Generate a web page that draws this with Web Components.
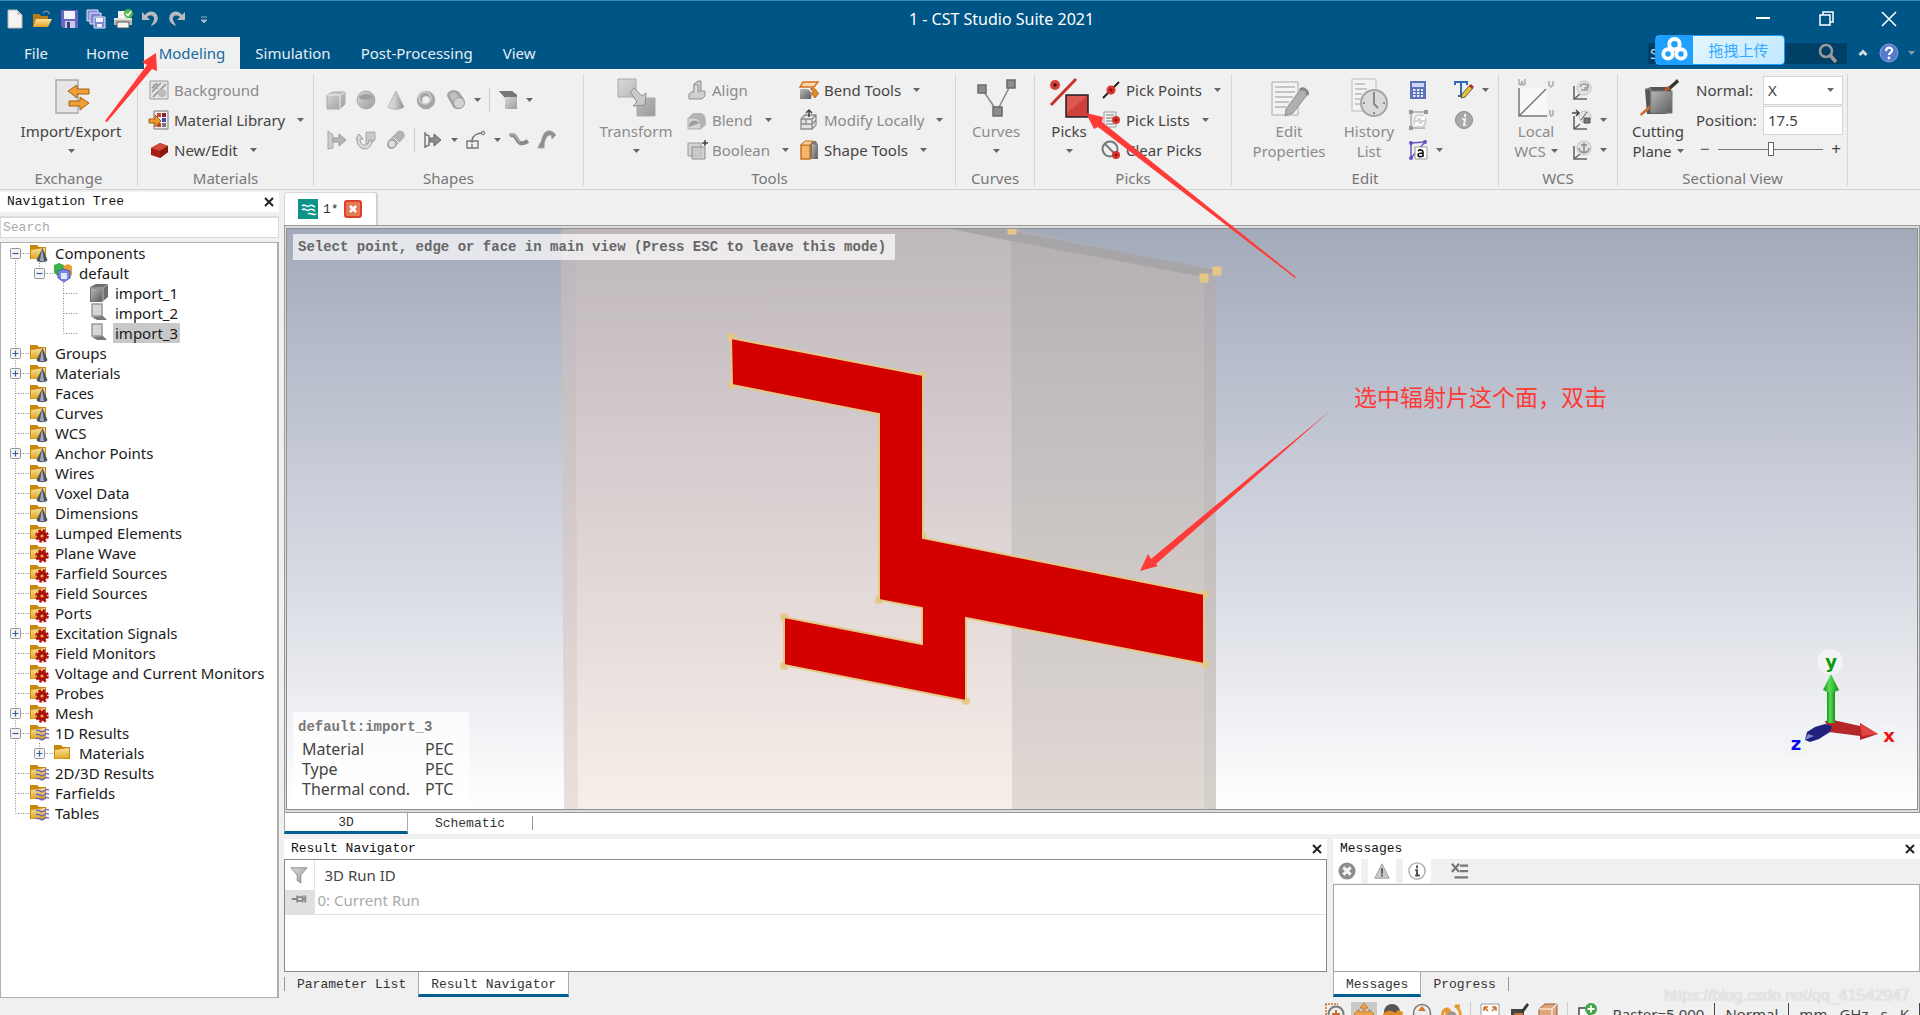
<!DOCTYPE html>
<html lang="en">
<head>
<meta charset="utf-8">
<title>1 - CST Studio Suite 2021</title>
<style>
  html, body { margin: 0; height: 100%; overflow: hidden; }
  body { font: 15px/20px "Noto Sans", "Open Sans", "Noto Sans CJK SC", sans-serif; color: #444; background: #f0f0f0; }
</style>
</head>
<body>
<studio-app></studio-app>
<script>
const MONO = '"Liberation Mono", "Noto Sans CJK SC", monospace';
const define = (name, css, html, setup) => customElements.define(name, class extends HTMLElement {
  connectedCallback() {
    if (this.shadowRoot) return;
    const root = this.attachShadow({ mode: 'open' });
    const body = typeof html === 'function' ? html(this) : html;
    root.innerHTML = `<style>:host{display:block}*{box-sizing:border-box}button{font:inherit;color:inherit;background:none;border:0;padding:0;margin:0}${css}</style>${body}`;
    if (setup) setup(this, root);
  }
});

/* ---------- icons ---------- */
const folder = '<path d="M1 2h7l2 2h7v12H1z" fill="#c8860d"/><path d="M2 7l14-2v10l-14 1z" fill="url(#o)"/>';
const cone = folder + '<path d="M13.500 5l5 12c-1 3-10 3-11 0z" fill="#4e5360"/><path d="M13 6l2 12c-2 1-4 0-4-1z" fill="#a3a9bb"/>';
const gear = folder + '<circle cx="13" cy="13" r="5" fill="#a81010"/><circle cx="13" cy="13" r="5.600" fill="none" stroke="#b31313" stroke-width="2.400" stroke-dasharray="2.600 1.800"/><circle cx="13" cy="13" r="1.600" fill="#e8b030"/>';
const wave = folder + '<g fill="none" stroke="#7468b8" stroke-width="1.500"><path d="M7 8c3-3 5 3 8 0s3-1 5-1M7 12c3-3 5 3 8 0s3-1 5-1M7 16c3-3 5 3 8 0s3-1 5-1"/></g>';
const axes = '<path d="M2 6v13h13M2 19l6-5" fill="none" stroke="#666" stroke-width="1.600"/>';
const ICONS = {
  /* quick access */
  newdoc: '<path d="M3 1h9l5 5v13H3z" fill="#f6f4f2" stroke="#b9b5b0"/><path d="M12 1v5h5z" fill="#cfc9c3"/>',
  open: '<path d="M1 5h6l2 2h7v11H1z" fill="#b97d15"/><path d="M4 10h16l-4 8H1z" fill="url(#o)"/><path d="M11 4c3-3 5-2 7 1" fill="none" stroke="#6b94ad" stroke-width="1.300"/>',
  save: '<path d="M2 1h17v18H4l-2-2z" fill="#6667c0"/><path d="M5 2h11v8H5z" fill="#f1f2fa"/><path d="M6 12h10v7H6z" fill="#c9cbe6"/><path d="M8 13h3v6H8z" fill="#3e3f73"/>',
  saveall: '<g fill="#7f87cf" stroke="#e4e7fb"><path d="M1 1h11v11H1z"/><path d="M4 4h11v11H4z"/><path d="M8 8h11v11H8z"/></g><path d="M10 9h7v4h-7zM11 15h5v3h-5z" fill="#eef0fd"/>',
  print: '<path d="M5 2h9v7H5z" fill="#f4f4f4"/><path d="M1 9h18v7H1z" fill="#bcbab4"/><path d="M1 9h18v2H1z" fill="#e4e2dc"/><path d="M4 13h12v6H4z" fill="#f5f5f5" stroke="#555"/><circle cx="15.500" cy="4.500" r="4.500" fill="#4db848"/><path d="M13 4.500l2 2 3-4" fill="none" stroke="#fff" stroke-width="1.500"/>',
  undo: '<path d="M2 3v8h8L7 8c4-3 8-1 7 3-1 3-3 5-3 6 6-2 8-7 6-11S9 1 5 6z" fill="#b9babd"/>',
  redo: '<path d="M18 3v8h-8l3-3c-4-3-8-1-7 3 1 3 3 5 3 6-6-2-8-7-6-11s8-5 12 0z" fill="#b9babd"/>',
  qat: '<path d="M7 8h6M7 11h6l-3 3z" stroke="#9fb4c4" fill="#9fb4c4"/>',
  min: '<path d="M3 9h14" stroke="#fff" stroke-width="2"/>',
  restore: '<path d="M4 6h10v10H4zM7 6V3h10v10h-3" fill="none" stroke="#fff" stroke-width="1.500"/>',
  close: '<path d="M3 3l14 14M17 3L3 17" stroke="#fff" stroke-width="1.600"/>',
  search: '<circle cx="8" cy="8" r="6" fill="none" stroke="#9a9a9a" stroke-width="2.500"/><path d="M12 12l6 7" stroke="#9a9a9a" stroke-width="3.500"/>',
  up: '<path d="M5 13l5-5 5 5" fill="none" stroke="#d8dfe4" stroke-width="4"/>',
  help: '<circle cx="10" cy="10" r="9" fill="#5579cc" stroke="#89a4de"/><path d="M7 8c0-5 7-4 6 0-1 2-3 2-3 4" fill="none" stroke="#fff" stroke-width="2.200"/><circle cx="10" cy="15" r="1.400" fill="#fff"/>',
  cloud: '<g fill="none" stroke="#fff" stroke-width="3"><circle cx="10" cy="5.500" r="4"/><circle cx="5" cy="13" r="3.600"/><circle cx="15" cy="13" r="3.600"/></g>',
  /* ribbon, small */
  bg: '<path d="M1 1h18v18H1z" fill="#e4e4e4" stroke="#999"/><path d="M3 12l9-9M3 8l5-5M4 17L17 4M13 17l4-4" stroke="#8d8d8d" stroke-width="1.500"/><circle cx="13" cy="13" r="4" fill="#bbb"/><path d="M4 4h5v5H4z" fill="#aaa"/>',
  matlib: '<path d="M5 1h14v18H5z" fill="#eee" stroke="#777"/><path d="M8 3h4v4H8zM8 13h4v4H8z" fill="#c94040"/><path d="M13 3h4v4h-4z" fill="#8c1f2b"/><path d="M13 8h4v4h-4z" fill="#4748b8"/><path d="M13 13h4v4h-4z" fill="#777"/><path d="M0 9h6V5l6 6-6 6v-4H0z" fill="#e89a2c" stroke="#a9610e"/>',
  newedit: '<path d="M2 8l9-5 8 3v6l-8 6-9-3z" fill="#a71f12"/><path d="M2 8l9-5 8 3-8 5z" fill="#d2493a"/><path d="M11 11l8-5v6l-8 6z" fill="#8a160c"/>',
  box: '<path d="M1 5l6-3h12v12l-5 5H1z" fill="url(#g)" stroke="#aaa"/><path d="M1 5h13l5-3M14 5v14" fill="none" stroke="#eee"/>',
  sphere: '<circle cx="10" cy="10" r="9" fill="url(#g)" stroke="#aaa"/><ellipse cx="10" cy="7" rx="7" ry="3" fill="#a0a0a0"/>',
  conesh: '<path d="M10 1l8 16c-3 3-13 3-16 0z" fill="url(#gh)" stroke="#b5b5b5"/>',
  torus: '<circle cx="10" cy="10" r="6.500" fill="none" stroke="#a6a6a6" stroke-width="5.500"/><circle cx="9" cy="8" r="6" fill="none" stroke="#cfcfcf" stroke-width="1.500"/>',
  cyl: '<path d="M1 6c0-6 8-7 12-4l5 7c3 8-7 13-11 8z" fill="#a2a2a2"/><path d="M3 4l6-2 4 5-6 5z" fill="#c2c2c2"/><circle cx="13" cy="13" r="5.500" fill="#d2d2d2" stroke="#999"/>',
  shell: '<path d="M1 1h13l5 4v14H7V8z" fill="#6d6d6d"/><path d="M7 7h12v12H7z" fill="url(#g)"/><path d="M1 1l6 6h12l-5-6z" fill="#777"/>',
  extr: '<path d="M2 1l5 4v13l-5 1z" fill="#ccc" stroke="#aaa"/><path d="M7 8h6V4l7 6-7 6v-4H7z" fill="#b7b7b7" stroke="#999"/>',
  rot: '<path d="M10 2h9v8l-5 4h-4z" fill="#c9c9c9" stroke="#aaa"/><path d="M4 9c0 8 9 8 9 1h3c0 12-15 12-15-1h-1l3-5 4 5z" fill="#ddd" stroke="#999"/>',
  loft: '<path d="M2 11L12 1c5-2 8 3 6 7L8 18c-5 3-9-2-6-7z" fill="#b3b3b3"/><circle cx="6" cy="14" r="4" fill="#ddd" stroke="#999"/><path d="M8 8l5 5" stroke="#eee"/>',
  extr2: '<path d="M2 2v16M2 4l4 2v9l-4 2" fill="none" stroke="#777" stroke-width="1.500"/><path d="M7 8h4V4l7 6-7 6v-4H7z" fill="#8d8d8d" stroke="#666"/>',
  bondwire: '<path d="M1 11h11v7H1zM6 13v-3C7 5 12 3 17 3M6 14v4" fill="none" stroke="#777" stroke-width="1.400"/><circle cx="17" cy="3" r="1.800" fill="#ccc" stroke="#777"/>',
  curve: '<path d="M1 6c5-4 7 6 10 7s5 0 8-2" fill="none" stroke="#8a8a8a" stroke-width="4"/><path d="M1 5c5-4 7 6 10 7" fill="none" stroke="#ccc"/>',
  trace: '<path d="M1 18h6c0-6 2-14 7-13l1 4 4-4c-6-7-12-5-14 4-1 4-3 5-4 9z" fill="#8e8e8e" stroke="#aaa"/>',
  align: '<path d="M7 4l4-3h3v11l-3 2H7z" fill="#c9c9c9" stroke="#8f8f8f"/><path d="M2 14l4-3h12v5l-3 3H2z" fill="#cfcfcf" stroke="#8f8f8f"/><path d="M7 13V5h4v8" fill="#ddd" stroke="#999"/>',
  blend: '<path d="M1 8l5-5h7c4 0 6 4 6 8v4l-5 4H1z" fill="#b4b4b4"/><path d="M1 8h6c5 0 7 4 7 8v3H1z" fill="#d6d6d6" stroke="#aaa"/><path d="M2 17c0-6 5-9 11-4" fill="#9d9d9d"/>',
  bool: '<path d="M1 3h13v13H1z" fill="#d5d5d5" stroke="#9a9a9a"/><path d="M5 7h13v12H5z" fill="#c4c4c4" fill-opacity=".7" stroke="#8f8f8f"/><path d="M18 0v6M15 3h6" stroke="#444" stroke-width="1.500"/>',
  bend: '<path d="M4 2h15l-4 5H1z" fill="#fbd9ae" stroke="#d5701c" stroke-width="1.500"/><path d="M1 9h5c6 0 7 5 6 10H1z" fill="url(#gd)"/><path d="M12 8c4 0 6 2 6 5h2l-4 5-4-5h2c0-2-1-3-2-3z" fill="#e08b28" stroke="#b4600c" stroke-width=".8"/>',
  modify: '<path d="M2 9l4-4h11v10l-4 4H2zM2 9h11l4-4M13 9v10M2 14h11l4-4M7 9v5" fill="#e2e2e2" stroke="#8c8c8c" stroke-width="1.300"/><path d="M10 7V1M7 3l3-3 3 3" fill="none" stroke="#444" stroke-width="1.500"/>',
  shape: '<path d="M2 4l4-3h11l2 4v14H2z" fill="#777"/><path d="M2 5h9v14H2z" fill="#f2b66f" stroke="#c9721c" stroke-width="1.500"/><path d="M2 5l4-4h8l-3 4z" fill="#f8cf9c" stroke="#c9721c"/><path d="M13 4v15h5V5z" fill="url(#gd)"/>',
  ppoint: '<path d="M2 18L18 2" stroke="#222" stroke-width="2"/><circle cx="10" cy="10" r="4.500" fill="#d9342b"/><circle cx="10" cy="10" r="1.500" fill="#7a0f0b"/>',
  plist: '<path d="M3 2h12v15H3z" fill="#f3f3f3" stroke="#999"/><path d="M5 5h8M5 8h8M5 11h8M5 14h8" stroke="#777"/><circle cx="15" cy="10" r="4" fill="#d9342b"/><circle cx="15" cy="10" r="1.300" fill="#7a0f0b"/>',
  pclear: '<circle cx="9" cy="9" r="7.500" fill="none" stroke="#777" stroke-width="2"/><path d="M4 4l11 11" stroke="#777" stroke-width="2"/><circle cx="15" cy="15" r="4" fill="#d9342b"/><circle cx="15" cy="15" r="1.300" fill="#7a0f0b"/>',
  calc: '<path d="M2 1h16v18H2z" fill="#5b71b8"/><path d="M4 3h12v4H4z" fill="#c9d6f5"/><path d="M5 10h10M5 13h10M5 16h10" stroke="#e6ecfb" stroke-width="2" stroke-dasharray="2.500 1.500"/>',
  update: '<path d="M3 2h15M3 2v16M3 18h14" fill="none" stroke="#aaa" stroke-width="1.500"/><g fill="#999"><path d="M1 0h4v4H1zM16 0h4v4h-4zM1 16h4v4H1z"/></g><circle cx="12" cy="11" r="7" fill="#d2d2d2"/><path d="M8 10c1-4 6-4 8-1M16 12c-2 4-6 4-8 1M16 6v3h-3M8 16v-3h3" fill="none" stroke="#fff" stroke-width="1.800"/>',
  param: '<path d="M3 3v15M3 3l14-1M3 18L17 2" fill="none" stroke="#6a58c8" stroke-width="1.500"/><g fill="#6350c4"><circle cx="3" cy="3" r="2"/><circle cx="17" cy="2" r="2"/><circle cx="3" cy="18" r="2"/></g><path d="M7 7h12v12H7z" fill="#fff" stroke="#999"/><path d="M10 11c2-2 5-1 5 1v4c-3 1-5 1-5-1s3-2 5-2" fill="none" stroke="#111" stroke-width="1.600"/>',
  textedit: '<path d="M1 5V2h12v3M7 2v14M4 16h6" fill="none" stroke="#2d6cb5" stroke-width="2"/><path d="M8 14l8-9 3 3-8 9-4 1z" fill="#e2c14b" stroke="#6b5a20"/><path d="M15 6l2-2 3 3-2 2z" fill="#b2322a"/>',
  info: '<circle cx="10" cy="10" r="8.500" fill="#a9a9a9" stroke="#8a8a8a"/><path d="M11 4v3M8 9h3l-1 6h2" fill="none" stroke="#eee" stroke-width="2"/>',
  wcs1: axes + '<circle cx="12" cy="8" r="7" fill="#e3e3e3" stroke="#c2c2c2"/><path d="M8 7c1-4 7-4 8 0M16 4v4h-4M9 10h7" fill="none" stroke="#999" stroke-width="1.500"/>',
  wcs2: axes + '<path d="M0 3h7M4 0l3 3-3 3" fill="none" stroke="#444" stroke-width="1.500"/><circle cx="13" cy="7" r="6" fill="#e3e3e3" stroke="#c2c2c2"/><path d="M9 10l6-8M12 8h6v5h-6z" fill="#777" stroke="#555"/>',
  wcs3: axes + '<circle cx="12" cy="8" r="7" fill="#e3e3e3" stroke="#c2c2c2"/><path d="M12 3v10M7 8c0 6 10 6 10 0M9 5h6" fill="none" stroke="#888" stroke-width="1.500"/>',
  /* ribbon, large (drawn on 40 x 40) */
  import: ['<path d="M5 2h22v33H5z" fill="#e6e6e6" stroke="#aaa" stroke-width="1.500"/><g fill="#ee9f35" stroke="#a9610e"><path d="M38 11v5H26v4l-9-7 9-6v4z"/><path d="M18 23v5h11v4l9-7-9-6v4z"/></g>'],
  transform: ['<path d="M2 1h18v18H2zM21 20h18v18H21z" fill="url(#g)" stroke="#aaa"/><path d="M14 14l4-4 8 8 4-3-1 12-12 1 4-4z" fill="#c9c9c9" stroke="#909090"/>'],
  curves: ['<path d="M6 11l15 22L35 6" fill="none" stroke="#888" stroke-width="1.500"/><g fill="#8d8d8d" stroke="#6a6a6a" stroke-width="1.500"><path d="M2 7h8v8H2zM31 2h8v8h-8zM17 29h9v9h-9z"/></g>'],
  picks: ['<circle cx="6" cy="7" r="5" fill="#d9403a"/><circle cx="6" cy="7" r="1.800" fill="#3d0b09"/><path d="M2 27L27 1" stroke="#c9332e" stroke-width="3"/><path d="M17 17h22v22H17z" fill="#cf403b" stroke="#222" stroke-width="1.500"/><path d="M18 35l20-17H18z" fill="#da5a52"/>'],
  editprop: ['<path d="M3 4h26v33H3z" fill="#f3f3f3" stroke="#aaa"/><path d="M6 9h20M6 14h20M6 19h18M6 24h14M6 29h11" stroke="#b5b5b5" stroke-width="1.600"/><path d="M17 31L31 12c3-3 9 1 7 5L24 35l-8 3z" fill="#b0b0b0" stroke="#8e8e8e"/><path d="M31 12c3-3 9 1 7 5" fill="none" stroke="#888" stroke-width="3"/>'],
  history: ['<path d="M3 1h24v32H3z" fill="#f3f3f3" stroke="#bbb"/><path d="M6 6h10M6 11h12M6 16h7M6 21h5M6 26h5" stroke="#bbb" stroke-width="1.600"/><circle cx="25" cy="25" r="13" fill="#dadada" stroke="#a6a6a6" stroke-width="2"/><path d="M25 16v10l4 4" fill="none" stroke="#888" stroke-width="2"/><path d="M25 14v2M25 34v2M14 25h2M34 25h2" stroke="#888" stroke-width="2"/>'],
  localwcs: ['<path d="M3 10h28v28H3z" fill="#f8f8f8"/><path d="M3 10v28h28M3 38L30 11" fill="none" stroke="#777" stroke-width="1.500"/><path d="M3 1v5l2 1 1-4 1 4 2-1V1M33 3v4l2 2 2-2V3M34 32v4l1 2 2-1v-5" fill="none" stroke="#aaa" stroke-width="1.500"/>'],
  cutting: ['<path d="M7 11l6-2h20v22l-5 5H9z" fill="#555"/><path d="M13 13h21v22H13z" fill="url(#gd)" stroke="#777"/><path d="M7 11h6v23" fill="none" stroke="#999"/><path d="M27 12l9-8 3-3 2 3-10 9z" fill="#333"/><path d="M25 13l5-5 3 3-4 2z" fill="#b3592a"/><path d="M2 36l11-10-2 6-8 6z" fill="#c96c34"/>'],
  /* tree */
  cone, gear, wave, folder,
  comps: '<path d="M1 2l5-2 5 2v9l-5 3-5-4z" fill="#3eb049"/><path d="M10 3l5-2 4 2v9l-4 3z" fill="#f0a030"/><path d="M5 8l6-2 6 2v7l-6 4-6-4z" fill="#7b8ae0" stroke="#4a59b8"/><path d="M8 10h6v6H8z" fill="#dfe4fb"/>',
  solid: '<path d="M1 4l6-3h12v13l-6 5H1z" fill="#6e6e6e"/><path d="M2 6h11v12H2z" fill="url(#gd)"/><path d="M1 5h13l5-4M14 5v13" fill="none" stroke="#b8b8b8"/>',
  sheet: '<path d="M3 1h10v12H3z" fill="#d6d6d6" stroke="#999" stroke-width="1.500"/><path d="M3 14l11-1 4 4H8z" fill="#777"/>',
  /* panels */
  doc: '<path d="M0 0h20v20H0z" fill="#0d9488"/><path d="M4 7c3-3 4 2 7 0s4 0 6 1M4 11c3-3 4 2 7 0s4 0 6 1M10 15c3-2 5 2 8 0" fill="none" stroke="#fff" stroke-width="1.500"/>',
  funnel: '<path d="M1 2h18l-7 8v9l-4-3v-6z" fill="url(#g)" stroke="#888"/>',
  pin: '<path d="M2 10h6M8 6v8M8 8h6v4H8M14 6v8M17 6v8M14 10h3" stroke="#888" stroke-width="2" fill="none"/>',
  err: '<circle cx="10" cy="10" r="9.500" fill="#8e8e8e"/><path d="M6 6l8 8M14 6l-8 8" stroke="#f4f4f4" stroke-width="3.500"/>',
  warn: '<path d="M10 2l8 16H2z" fill="#c9c9c9" stroke="#999"/><path d="M10 7v6M10 14v2" stroke="#555" stroke-width="2"/>',
  inf: '<circle cx="10" cy="10" r="9" fill="#fff" stroke="#aaa" stroke-width="1.500"/><path d="M10 4v3M8 9h2v6M8 15h5" fill="none" stroke="#444" stroke-width="2"/>',
  clear: '<path d="M1 2l8 9M9 2l-8 9M10 4h9M10 10h9M4 17h15" stroke="#777" stroke-width="2.500"/>',
  /* status bar */
  s1: '<path d="M0 1h13M1 1v18" stroke="#c9702e" stroke-width="1.500" stroke-dasharray="2 1"/><circle cx="11" cy="11" r="7.500" fill="#eee" stroke="#777" stroke-width="2"/><path d="M11 7v8M7 11h8" stroke="#c9702e" stroke-width="2"/>',
  s2: '<path d="M10 0l4 5h-3v4h4V6l5 5-5 5v-3h-4v6H9v-6H5v3l-5-5 5-5v3h4V5H6z" fill="#efa24b" stroke="#c57422" stroke-width=".8"/>',
  s3: '<circle cx="9" cy="9" r="8" fill="#555"/><path d="M0 11c4-4 9-4 12-1l3-3 5 2-1 8-6-2C8 12 4 14 0 18z" fill="#e58a24"/>',
  s4: '<circle cx="10" cy="10" r="8.500" fill="#eee" stroke="#777" stroke-width="1.500"/><path d="M10 3l4 5H6zM10 17l4-5H6z" fill="#d2762a"/>',
  s5: '<circle cx="10" cy="14" r="6" fill="#999"/><path d="M2 18C0 10 3 6 6 6v4l3-4M18 18c3-8 0-13-4-15h5" fill="none" stroke="#e69a2e" stroke-width="3"/>',
  s6: '<path d="M1 1h18v18H1z" fill="#fff" stroke="#999"/><path d="M4 4h4M4 4v4M4 4l4 4M16 4h-4M16 4v4M16 4l-4 4" stroke="#cc6f2d" stroke-width="1.600"/>',
  s7: '<path d="M2 6h13v13H2z" fill="#444"/><path d="M5 10h9v9H5z" fill="#c4713b"/><path d="M12 8l6-8 2 2-6 8z" fill="#333"/>',
  s8: '<path d="M1 6l6-5h12v14l-5 5H1z" fill="#dba57d" stroke="#9a5b33"/><path d="M1 6h13l5-5M14 6v14" fill="none" stroke="#fbe2cf" stroke-width="1.500"/>',
  s9: '<path d="M2 5h10v14H2z" fill="#fff" stroke="#444" stroke-width="1.500"/><path d="M4 19v-7h5v7" fill="#555"/><circle cx="14" cy="6" r="6" fill="#3ea744"/><path d="M14 2.500v7M10.500 6h7" stroke="#fff" stroke-width="2"/>'
};
const DEFS = `<defs>
<linearGradient id="g" x2="1" y2="1"><stop stop-color="#d8d8d8"/><stop offset="1" stop-color="#9c9c9c"/></linearGradient>
<linearGradient id="gh"><stop stop-color="#dcdcdc"/><stop offset=".4" stop-color="#cfcfcf"/><stop offset="1" stop-color="#8f8f8f"/></linearGradient>
<linearGradient id="gd" x2="1" y2="1"><stop stop-color="#b8b8b8"/><stop offset="1" stop-color="#5c5c5c"/></linearGradient>
<linearGradient id="o" x2="0" y2="1"><stop stop-color="#fbe29a"/><stop offset="1" stop-color="#dfa422"/></linearGradient></defs>`;
define('app-icon', ':host{display:block;flex:none;width:20px;height:20px}:host([big]){width:40px;height:40px}:host([sm]){width:18px;height:18px}svg{display:block;width:100%;height:100%;overflow:visible}',
  el => { const d = ICONS[el.getAttribute('name')]; const big = Array.isArray(d);
    return `<svg viewBox="0 0 ${big ? '40 40' : '20 20'}" aria-hidden="true">${DEFS}${big ? d[0] : d}</svg>`; });
define('drop-caret', ':host{display:block;flex:none;width:7px;height:4px;color:#666}svg{display:block}',
  '<svg width="7" height="4" aria-hidden="true"><path d="M0 0h7L3.500 4z" fill="currentColor"/></svg>');

/* ---------- title bar and ribbon tabs ---------- */
define('title-bar', `
  :host{background:#005587;color:#fff;border-top:1px solid #3b86b3;height:69px;box-sizing:border-box}
  .top{display:grid;grid-template-columns:auto 1fr auto;align-items:center;height:36px}
  .name{text-align:center;padding-left:36px;font-size:16px}
  .qat{display:flex;gap:7px;padding-left:5px}
  .qat button,.win button{display:block}
  .win{display:flex;gap:43px;justify-content:flex-end;padding-right:21px}
  .bot{display:flex;height:32px}
  nav{display:flex;flex:1}
  nav a{color:#e6eef4;text-decoration:none;line-height:32px;padding:0 15px}
  nav a:first-child{padding:0 23px 0 24px}
  nav a.on{background:#f0f0f0;color:#17699c}
  .right{display:flex;align-items:center;gap:9px;padding-right:5px}
  .find{position:relative;display:flex;align-items:center;justify-content:flex-end;width:199px;height:21px;background:#003f66;padding-right:9px;overflow:visible}
  .find input{flex:1;min-width:0;background:none;border:0;color:#cdd9e2;font:inherit;padding:0 2px}
  .find input::placeholder{color:#cdd9e2}
  .up{position:absolute;left:7px;top:-8px;display:flex;align-items:center;width:130px;height:30px;border-radius:4px;overflow:hidden;border:1px solid #1a9cff;background:linear-gradient(135deg,#f0faff,#bfe8ff);color:#35aaff}
  .up app-icon{width:37px;height:28px;padding:1px 5px;box-sizing:border-box;background:#1fa0ff}
  .up span{flex:1;text-align:center;font:15px/28px "Noto Sans CJK SC",sans-serif}
  `, `
  <div class="top"><div class="qat">${['newdoc:New', 'open:Open', 'save:Save', 'saveall:Save all', 'print:Print', 'undo:Undo', 'redo:Redo', 'qat:Customize'].map(s => { const [i, t] = s.split(':'); return `<button aria-label="${t}"><app-icon name="${i}"></app-icon></button>`; }).join('')}</div>
  <div class="name">1 - CST Studio Suite 2021</div>
  <div class="win"><button aria-label="Minimize"><app-icon name="min"></app-icon></button><button aria-label="Restore"><app-icon name="restore"></app-icon></button><button aria-label="Close"><app-icon name="close"></app-icon></button></div></div>
  <div class="bot"><nav><a href="#file">File</a><a href="#home">Home</a><a href="#modeling" class="on">Modeling</a><a href="#simulation">Simulation</a><a href="#post">Post-Processing</a><a href="#view">View</a></nav>
  <div class="right"><div class="find"><input aria-label="Search commands" placeholder="S"><app-icon name="search"></app-icon><button class="up"><app-icon name="cloud"></app-icon><span>拖拽上传</span></button></div>
  <app-icon name="up" style="width:14px;height:14px"></app-icon><app-icon name="help"></app-icon><drop-caret style="color:#8a9aa6"></drop-caret></div></div>`);

/* ---------- ribbon ---------- */
define('ribbon-group', `
  :host{flex:none;width:var(--w);height:112px;border-right:1px solid #d5d5d5;box-sizing:border-box}
  .c{display:flex;height:91px;padding-top:1px;padding-left:var(--l,12px);gap:var(--gap,4px);box-sizing:border-box}
  .l{text-align:center;color:#777;line-height:26px;height:21px}`,
  el => `<div class="c"><slot></slot></div><div class="l">${el.getAttribute('label')}</div>`);
define('ribbon-big', `
  :host{flex:none;width:var(--bw,60px)}
  button{display:flex;flex-direction:column;align-items:center;width:100%;white-space:nowrap}
  :host([off]) button{color:#8b8b8b}
  app-icon{margin:3px 0}
  .n{display:flex;align-items:center;justify-content:center;height:20px;gap:5px}`,
  el => { const two = el.getAttribute('line2'); const caret = el.hasAttribute('caret') ? '<drop-caret></drop-caret>' : '';
    return `<button><app-icon name="${el.getAttribute('icon')}" big></app-icon><span class="n"><slot></slot></span><span class="n">${two || ''}${caret}</span></button>`; });
define('ribbon-item', `
  button{display:flex;align-items:center;height:var(--h,30px);white-space:nowrap}
  :host([off]) button{color:#8b8b8b}
  .t{margin-left:5px}.t+drop-caret{margin-left:12px}app-icon+drop-caret{margin-left:8px}`,
  el => `<button aria-label="${el.textContent.trim() || el.getAttribute('name')}"><app-icon name="${el.getAttribute('icon')}"></app-icon>${el.textContent.trim() ? '<span class="t"><slot></slot></span>' : ''}${el.hasAttribute('caret') ? '<drop-caret></drop-caret>' : ''}</button>`);
define('section-fields', `
  :host{flex:none;width:147px;margin-left:4px}
  .f{display:flex;align-items:center;height:30px;justify-content:space-between}
  .w{position:relative;width:80px}
  select,input.p{width:80px;height:29px;border:1px solid #d5d5d5;background:#fff;font:inherit;color:#444;padding:0 4px;appearance:none;border-radius:0;display:block;outline:0}
  .w drop-caret{position:absolute;right:9px;top:12px;pointer-events:none}
  .s{display:flex;align-items:center;height:28px;gap:8px;padding:0 2px 0 4px}
  .s button{font-size:17px;line-height:20px}
  input[type=range]{flex:1;min-width:0;height:16px;margin:0;appearance:none;background:none}
  input[type=range]::-webkit-slider-runnable-track{height:1px;background:#777}
  input[type=range]::-webkit-slider-thumb{appearance:none;width:6px;height:14px;margin-top:-7px;background:#fff;border:1px solid #666}`, `
  <div class="f"><label for="n">Normal:</label><div class="w"><select id="n"><option>X</option><option>Y</option><option>Z</option></select><drop-caret></drop-caret></div></div>
  <div class="f"><label for="p">Position:</label><input class="p" id="p" value="17.5"></div>
  <div class="s"><button aria-label="Decrease">−</button><input type="range" aria-label="Position" value="50"><button aria-label="Increase">+</button></div>`);
define('ribbon-bar', `
  :host{display:flex;height:121px;box-sizing:border-box;padding-top:4px;background:#f0f0f0;border-top:1px solid #fafafa;border-bottom:1px solid #d2d2d2;overflow:hidden}
  .col{flex:none;width:var(--cw,auto)}
  .rows{padding-top:5px}
  .r{display:flex;align-items:center;height:40px;gap:8px}
  .r>span{display:flex;gap:10px}
  .r i{width:1px;height:24px;background:#ccc}`, `
  <ribbon-group label="Exchange" style="--w:138px;--l:10px"><ribbon-big icon="import" caret style="--bw:122px">Import/Export</ribbon-big></ribbon-group>
  <ribbon-group label="Materials" style="--w:176px;--l:11px"><div class="col"><ribbon-item icon="bg" off>Background</ribbon-item><ribbon-item icon="matlib" caret>Material Library</ribbon-item><ribbon-item icon="newedit" caret>New/Edit</ribbon-item></div></ribbon-group>
  <ribbon-group label="Shapes" style="--w:270px"><div class="rows">
    <div class="r"><span><ribbon-item icon="box" name="Brick"></ribbon-item><ribbon-item icon="sphere" name="Sphere"></ribbon-item><ribbon-item icon="conesh" name="Cone"></ribbon-item><ribbon-item icon="torus" name="Torus"></ribbon-item><ribbon-item icon="cyl" name="Cylinder" caret></ribbon-item></span><i></i><ribbon-item icon="shell" name="Shell" caret></ribbon-item></div>
    <div class="r"><span><ribbon-item icon="extr" name="Extrude"></ribbon-item><ribbon-item icon="rot" name="Rotate"></ribbon-item><ribbon-item icon="loft" name="Loft"></ribbon-item></span><i></i><ribbon-item icon="extr2" name="Extrude curve" caret></ribbon-item><ribbon-item icon="bondwire" name="Bond wire" caret></ribbon-item><ribbon-item icon="curve" name="Sweep"></ribbon-item><ribbon-item icon="trace" name="Trace"></ribbon-item></div></div></ribbon-group>
  <ribbon-group label="Tools" style="--w:372px;--l:9px;--gap:8px"><ribbon-big icon="transform" caret off style="--bw:86px">Transform</ribbon-big>
    <div class="col" style="--cw:104px"><ribbon-item icon="align" off>Align</ribbon-item><ribbon-item icon="blend" caret off>Blend</ribbon-item><ribbon-item icon="bool" caret off>Boolean</ribbon-item></div>
    <div class="col"><ribbon-item icon="bend" caret>Bend Tools</ribbon-item><ribbon-item icon="modify" caret off>Modify Locally</ribbon-item><ribbon-item icon="shape" caret>Shape Tools</ribbon-item></div></ribbon-group>
  <ribbon-group label="Curves" style="--w:79px;--l:10px"><ribbon-big icon="curves" caret off>Curves</ribbon-big></ribbon-group>
  <ribbon-group label="Picks" style="--w:197px;--l:6px"><ribbon-big icon="picks" caret style="--bw:56px">Picks</ribbon-big>
    <div class="col"><ribbon-item icon="ppoint" caret>Pick Points</ribbon-item><ribbon-item icon="plist" caret>Pick Lists</ribbon-item><ribbon-item icon="pclear">Clear Picks</ribbon-item></div></ribbon-group>
  <ribbon-group label="Edit" style="--w:267px;--l:16px;--gap:6px"><ribbon-big icon="editprop" line2="Properties" off style="--bw:82px">Edit</ribbon-big><ribbon-big icon="history" line2="List" off style="--bw:66px">History</ribbon-big>
    <div class="col" style="--cw:40px"><ribbon-item icon="calc" name="Calculator"></ribbon-item><ribbon-item icon="update" name="Update"></ribbon-item><ribbon-item icon="param" name="Parametrize" caret></ribbon-item></div>
    <div class="col"><ribbon-item icon="textedit" name="Rename" caret></ribbon-item><ribbon-item icon="info" name="Information"></ribbon-item></div></ribbon-group>
  <ribbon-group label="WCS" style="--w:119px;--l:7px;--gap:6px"><ribbon-big icon="localwcs" line2="WCS" caret off>Local</ribbon-big>
    <div class="col"><ribbon-item icon="wcs1" name="Rotate WCS"></ribbon-item><ribbon-item icon="wcs2" name="Align WCS" caret></ribbon-item><ribbon-item icon="wcs3" name="Fix WCS" caret></ribbon-item></div></ribbon-group>
  <ribbon-group label="Sectional View" style="--w:230px;--l:10px"><ribbon-big icon="cutting" line2="Plane" caret>Cutting</ribbon-big><section-fields></section-fields></ribbon-group>`);

/* ---------- navigation tree ---------- */
const TREE = [
  [0, '-', 'cone', 'Components'], [1, '-', 'comps', 'default'], [2, '', 'solid', 'import_1'], [2, '', 'sheet', 'import_2'], [2, 'last', 'sheet', 'import_3', 1],
  [0, '+', 'cone', 'Groups'], [0, '+', 'cone', 'Materials'], ...['Faces', 'Curves', 'WCS'].map(t => [0, '', 'cone', t]), [0, '+', 'cone', 'Anchor Points'],
  ...['Wires', 'Voxel Data', 'Dimensions'].map(t => [0, '', 'cone', t]), ...['Lumped Elements', 'Plane Wave', 'Farfield Sources', 'Field Sources', 'Ports'].map(t => [0, '', 'gear', t]),
  [0, '+', 'gear', 'Excitation Signals'], ...['Field Monitors', 'Voltage and Current Monitors', 'Probes'].map(t => [0, '', 'gear', t]), [0, '+', 'gear', 'Mesh'],
  [0, '-', 'wave', '1D Results'], [1, '+', 'folder', 'Materials'], [0, '', 'wave', '2D/3D Results'], [0, '', 'wave', 'Farfields'], [0, 'last', 'wave', 'Tables']];
const guides = ([depth, state], i) => {
  const x = [14.5, 38.5, 62.5][depth], w = [28, 52, 88][depth], end = [28, 52, 76][depth];
  let d = `M${x} 10.5H${end}`;
  d += depth ? `M14.5 0V20M${x} 0V${depth === 1 || state === 'last' ? 10 : 20}` : `M14.5 ${i ? 0 : 10}V${state === 'last' ? 10 : 20}`;
  const ex = state === '-' || state === '+' ? `<rect x="${x - 5}" y="5.500" width="10" height="10" rx="1" fill="#f4f4f4" stroke="#969696"/><path d="M${x - 3} 10.5h6${state === '+' ? `M${x} 7.5v6` : ''}" stroke="#3a5aa8" stroke-width="1.200"/>` : '';
  return `<svg width="${w}" height="20" aria-hidden="true"><path d="${d}" stroke="#888" stroke-dasharray="1 1.500" fill="none"/>${ex}</svg>`;
};
define('nav-tree', `
  :host{flex:none;width:279px;display:flex;flex-direction:column;gap:4px;padding-top:2px;height:100%;box-sizing:border-box}
  input{height:22px;border:1px solid #d9d9d9;border-top:2px solid #dcdcdc;background:#fff;font:13px ${MONO};padding:0 2px;margin:0;width:100%;outline:0;flex:none}
  input::placeholder{color:#aaa}
  ul{flex:1;min-height:0;margin:0 0 4px;padding:0;list-style:none;background:#fff;border:1px solid #b0b0b0;border-right-width:2px;color:#1a1a1a;line-height:20px}
  li{display:flex;align-items:center;height:20px}
  svg{display:block;flex:none}
  span{padding:0 2px;margin-left:4px}
  .sel{background:#c8c8c8}`,
  () => `<dock-title>Navigation Tree</dock-title><input placeholder="Search" aria-label="Search">
  <ul>${TREE.map((r, i) => `<li>${guides(r, i)}<app-icon name="${r[2]}"></app-icon><span${r[4] ? ' class="sel"' : ''}>${r[3]}</span></li>`).join('')}</ul>`);

/* ---------- docked panels ---------- */
define('dock-title', `:host{display:flex;flex:none;align-items:center;height:20px;background:#fff;color:#111;font:13px/20px ${MONO};padding:0 5px 0 7px;box-sizing:border-box}
  span{flex:1}svg{display:block}`,
  '<span><slot></slot></span><button aria-label="Close panel"><svg width="10" height="10"><path d="M1 1l8 8M9 1l-8 8" stroke="#222" stroke-width="2"/></svg></button>');
define('tab-strip', `
  :host{display:flex;flex:none;height:25px;font:13px/25px ${MONO};color:#333}
  button{padding:0 12px;white-space:nowrap}
  button.on{background:#fff;border:1px solid #ababab;border-top:0;border-bottom:3px solid #005f94;line-height:25px}
  :host([wide]){height:21px;background:#fff;line-height:20px}
  :host([wide]) button{min-width:124px}
  :host([wide]) button.on{line-height:19px}
  i{width:1px;height:14px;background:#999;margin:5px 0}
  :host([wide]) i{margin:3px 0}`,
  el => el.getAttribute('tabs').split('|').map(t => t === '-' ? '<i></i>' : t[0] === '*' ? `<button class="on">${t.slice(1)}</button>` : `<button>${t}</button>`).join(''));
define('result-navigator', `
  :host{display:flex;flex-direction:column;min-width:0}
  .b{flex:1;background:#fff;border:1px solid #828790}
  table{width:100%;border-collapse:collapse;text-align:left}
  th{font-weight:400}
  th,td{padding:0 3px;height:24px;line-height:20px;vertical-align:top}
  tr:first-child>*{height:30px;vertical-align:middle}
  tr>:first-child{width:29px;padding:0 5px;border-right:1px solid #e2e2e2}
  tr+tr>:first-child{background:#e0e0e0}
  tr>th+th{padding-left:10px}
  tr+tr{color:#aaa;border-bottom:1px solid #e2e2e2}`, `
  <dock-title>Result Navigator</dock-title>
  <div class="b"><table><tr><th><app-icon name="funnel" sm></app-icon></th><th>3D Run ID</th></tr><tr><td><app-icon name="pin" sm></app-icon></td><td>0: Current Run</td></tr></table></div>
  <tab-strip tabs="-|Parameter List|*Result Navigator"></tab-strip>`);
define('message-panel', `
  :host{display:flex;flex-direction:column;min-width:0}
  .t{display:flex;height:25px;gap:7px}
  .t button{width:28px;height:24px;padding:0 4px 0 5px;background:#fff}
  .t button:last-child{background:none;margin-left:8px}
  .b{flex:1;background:#fff;border:1px solid #a5a8ad}`, `
  <dock-title>Messages</dock-title>
  <div class="t"><button aria-label="Errors"><app-icon name="err" sm></app-icon></button><button aria-label="Warnings"><app-icon name="warn" sm></app-icon></button><button aria-label="Information"><app-icon name="inf" sm></app-icon></button><button aria-label="Clear messages"><app-icon name="clear" sm></app-icon></button></div>
  <div class="b"></div><tab-strip tabs="*Messages|Progress|-"></tab-strip>`);

/* ---------- 3D view ---------- */
const grad = (id, a, b) => `<linearGradient id="${id}" gradientUnits="userSpaceOnUse" x1="0" x2="0" y1="229" y2="810"><stop stop-color="${a}"/><stop offset="1" stop-color="${b}"/></linearGradient>`;
const dots = (list, s) => list.map(([x, y]) => `<rect x="${x - s / 2}" y="${y - s / 2}" width="${s}" height="${s}"/>`).join('');
define('model-view', `
  :host{flex:1;min-height:0;display:block;border:1px solid #9a9a9a;background:#dcdcdc;padding:2px 1px;box-sizing:border-box}
  .v{position:relative;height:100%;border:1px solid #8f8f8f;overflow:hidden;background:linear-gradient(#a3aaba,#c4c9d5 38%,#d9dce4 62%,#fff)}
  svg{position:absolute;left:0;top:0;width:100%;height:100%}
  svg.a{left:auto;right:0;width:160px;height:160px;top:390px}
  text{font:bold 18px "DejaVu Sans","Noto Sans",sans-serif;text-anchor:middle}
  .hint{position:absolute;left:6px;top:5px;height:26px;padding:0 9px 0 5px;background:rgba(255,255,255,.7);color:#666;font:bold 14px/26px ${MONO};white-space:nowrap}
  .info{position:absolute;left:6px;bottom:3px;width:176px;height:94px;background:rgba(255,255,255,.7);padding:5px;box-sizing:border-box}
  .info b{display:block;font:bold 14px/20px ${MONO};color:#777}
  dl{display:grid;grid-template-columns:123px 1fr;margin:2px 0 0 4px;font-size:16px;line-height:20px}
  dt,dd{margin:0}`, `
  <div class="v"><svg aria-hidden="true"><defs>${grad('f', '#beb7bc', '#f8eee9')}${grad('l', '#bbb4ba', '#ebdfdb')}${grad('r', '#b4b0b3', '#e0d9d4')}${grad('e', '#aea9b0', '#d7d1cc')}</defs>
  <g transform="translate(-287 -229)">
   <path d="M561 229h15l2 581h-14z" fill="url(#l)"/><path d="M575 229h437v581H578z" fill="url(#f)"/>
   <path d="M1011 229l205 42v539h-204z" fill="url(#r)"/><path d="M1204 276l12-6v540h-12z" fill="url(#e)"/>
   <path d="M951 229h52l213 41-12 7-193-36z" fill="#a8a5a9"/>
   <g fill="#e6c886">${dots([[1012, 230], [1204, 278], [1217, 271]], 9)}${dots([[731, 337], [732, 385], [922, 375], [923, 537], [1205, 594], [1205, 664], [966, 701], [784, 617], [784, 666], [879, 600]], 7)}</g>
   <path d="M731 338L923 375V538L1204 594V664L966 618V701L784 665V617L922 644V608L879 600V414L732 385z" fill="#d20000" stroke="#e6c886" stroke-width="2"/>
  </g></svg>
  <svg class="a" aria-hidden="true"><defs><linearGradient id="gr"><stop stop-color="#1d8f1d"/><stop offset=".4" stop-color="#52e052"/><stop offset="1" stop-color="#1f8a1f"/></linearGradient></defs>
   <g transform="translate(-1756 -619)"><g fill="#f2f3f5"><circle cx="1829" cy="662" r="13"/><circle cx="1888" cy="736" r="13"/><circle cx="1795" cy="744" r="13"/></g>
   <path d="M1824 721l8-1 27 6v-3l18 11-18 6v-4l-31-4z" fill="#b52626"/><path d="M1859 724l18 10-16 2z" fill="#e24444"/>
   <path d="M1826 690h8v33h-8z" fill="url(#gr)"/><path d="M1830 674l8 16-4 2h-8l-4-2z" fill="url(#gr)"/>
   <path d="M1824 724l7 2-2 6-11 7-9 3-5-2 2-8 8-5z" fill="#20207e"/><path d="M1804 740l3-6 6 2z" fill="#8086c8"/>
   <text x="1830" y="668" fill="#0a9a0a">y</text><text x="1888" y="742" fill="#f01010">x</text><text x="1795" y="750" fill="#0a0af0">z</text></g></svg>
  <div class="hint">Select point, edge or face in main view (Press ESC to leave this mode)</div>
  <div class="info"><b>default:import_3</b><dl><dt>Material</dt><dd>PEC</dd><dt>Type</dt><dd>PEC</dd><dt>Thermal cond.</dt><dd>PTC</dd></dl></div></div>`);
define('doc-tabs', `
  :host{display:flex;height:35px;flex:none;padding-top:2px;box-sizing:border-box}
  .t{display:flex;align-items:center;gap:5px;width:94px;background:#fff;border:1px solid #d8d8d8;border-right:2px solid #d0d0d0;border-bottom:0;border-radius:4px 4px 0 0;padding-left:13px;font:13px ${MONO};color:#333}
  button{width:18px;height:18px;background:#e27a54;border:2px solid #d8402f;border-radius:3px}svg{display:block;margin:3px auto}`,
  '<div class="t"><app-icon name="doc"></app-icon><span>1*</span><button aria-label="Close document"><svg width="8" height="8"><path d="M1 1l6 6M7 1l-6 6" stroke="#fff" stroke-width="2.500"/></svg></button></div>');

define('status-bar', `
  :host{display:flex;flex:none;justify-content:flex-end;align-items:center;height:24px;font:15px/22px "Noto Sans",sans-serif;color:#444;white-space:nowrap}
  .i{display:flex;gap:3px;margin-right:2px}
  .i button{width:26px;height:24px;padding:1px 3px 3px}
  .i button.on{background:#c9c9c9}
  .i hr{width:1px;height:24px;margin:0 3px;border:0;background:#ccc}
  .f{padding:0 10px;border-right:1px solid #444}
  .u{display:flex;gap:12px}`, `
  <div class="i">${['s1', '*s2', 's3', 's4', 's5', '-', 's6', 's7', 's8', '-', 's9'].map((n, i) => n === '-' ? '<hr>' : `<button aria-label="View tool ${i + 1}"${n[0] === '*' ? ' class="on"' : ''}><app-icon name="${n.replace('*', '')}"></app-icon></button>`).join('')}</div>
  <div class="f">Raster=5.000</div><div class="f">Normal</div><div class="f u"><span>mm</span><span>GHz</span><span>s</span><span>K</span></div>`);

/* ---------- arrows and notes drawn over the window ---------- */
define('annotation-layer', `
  :host{position:absolute;inset:0;pointer-events:none;overflow:hidden}
  svg{position:absolute;left:0;top:0;width:100%;height:100%}
  p{position:absolute;margin:0;left:1354px;top:380px;font:23px/32px "Noto Sans CJK SC",sans-serif;color:#ff3b38;white-space:nowrap}
  small{position:absolute;right:10px;bottom:9px;font:16px/20px "Liberation Sans",sans-serif;color:#e9e9e9;text-shadow:0 0 1px #bbb}`, `
  <svg aria-hidden="true"><g fill="#ff3b38"><path d="M156 53l-14 9 5 3-42 56 2 1 45-53 5 2z"/><path d="M1086 113l17 4-1 5 194 155-1 1-197-151-4 2z"/><path d="M1140 571l8-17 3 5 180-149-175 154 2 2z"/></g></svg>
  <p>选中辐射片这个面，双击</p><small>https://blog.csdn.net/qq_41542947</small>`);

define('studio-app', `
  :host{position:relative;display:flex;flex-direction:column;height:calc(100vh + 11px)}
  main{flex:1;min-height:0;display:flex;gap:5px}
  .r{flex:1;min-width:0;display:flex;flex-direction:column;height:100%}
  .d{display:flex;gap:6px;height:158px;margin:5px 0;flex:none}
  result-navigator{flex:1043}message-panel{flex:587}
  annotation-layer{height:100vh;bottom:auto}`, `
  <title-bar></title-bar><ribbon-bar></ribbon-bar>
  <main><nav-tree></nav-tree><div class="r"><doc-tabs></doc-tabs><model-view></model-view><tab-strip wide tabs="*3D|Schematic|-"></tab-strip>
  <div class="d"><result-navigator></result-navigator><message-panel></message-panel></div></div></main>
  <status-bar></status-bar><annotation-layer></annotation-layer>`);
</script>
</body>
</html>
